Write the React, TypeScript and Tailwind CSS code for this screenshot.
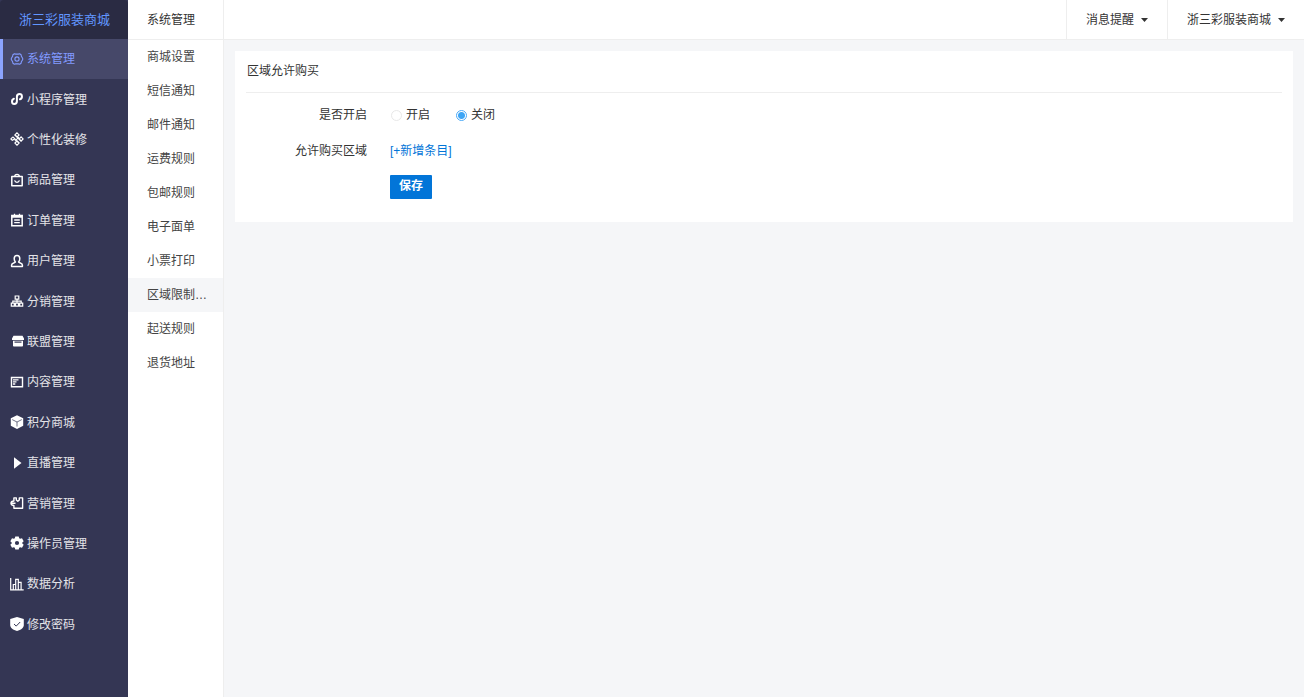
import {ReactNode, useState} from 'react';

function Icon({children, filled = false}: {children: ReactNode; filled?: boolean}) {
  return (
    <svg
      className="mb-px size-3.5 shrink-0"
      viewBox="0 0 14 14"
      fill={filled ? 'currentColor' : 'none'}
      stroke={filled ? 'none' : 'currentColor'}
      strokeWidth={1.3}
      aria-hidden="true"
    >
      {children}
    </svg>
  );
}

const mainMenu: {label: string; icon: ReactNode}[] = [
  {
    label: '系统管理',
    icon: (
      <Icon>
        <path
          strokeWidth="1.1"
          strokeLinejoin="round"
          d="M4.4 1.8l1.3.3h2.6l1.3-.3 1.5 1 .3 1.5 1.3 2.2v1l-1.300 2.200-.3 1.500-1.500 1-1.300-.3H5.700l-1.300.3-1.500-1-.3-1.500L1.300 7.500v-1l1.300-2.200.3-1.500z"
        />
        <circle cx="7" cy="7" r="2.1" strokeWidth="1.1" />
      </Icon>
    ),
  },
  {
    label: '小程序管理',
    icon: (
      <Icon>
        <path
          strokeWidth="2"
          strokeLinecap="round"
          d="M3.900 6.700C1.200 7.700 1.500 12 4.200 12c1.700 0 2.700-1.100 2.700-2.700V4.700C6.900 3.100 7.900 2 9.600 2c2.900 0 3.200 4.300.4 5.300"
        />
      </Icon>
    ),
  },
  {
    label: '个性化装修',
    icon: (
      <Icon>
        <g strokeWidth="1.2">
          <path d="M7 .8l2.100 2.100L7 5 4.900 2.900zM7 9l2.100 2.100L7 13.200l-2.100-2.100z" />
          <path d="M4.900 2.900l6.200 6.200M2.900 4.900l6.200 6.200M9.100 4.900L4.900 9.100" />
          <path d="M2.900 4.900L.9 6.900l1.400 1.400 2.600-1.400M11.100 4.900l2 2-2 2.200L9.100 7z" />
        </g>
      </Icon>
    ),
  },
  {
    label: '商品管理',
    icon: (
      <Icon>
        <path strokeWidth="1.5" strokeLinejoin="round" d="M1.800 3.500h10.400v9.200H1.800z" />
        <path d="M4.700 3.500C4.700.6 9.300.6 9.300 3.500M4.600 7.400c.7 2.500 4.100 2.500 4.800 0" />
      </Icon>
    ),
  },
  {
    label: '订单管理',
    icon: (
      <Icon>
        <path strokeWidth="1.500" d="M1.800 2.500h10.400v10.200H1.800zM1.800 4h10.400" />
        <path d="M4.500.7v3M9.500.7v3M4.200 7h5.600M4.200 9.600h5.600" />
      </Icon>
    ),
  },
  {
    label: '用户管理',
    icon: (
      <Icon>
        <path
          strokeWidth="1.500"
          strokeLinejoin="round"
          d="M5.400 8C4.500 7 4.200 6 4.200 4.700c0-1.900 1-3.100 2.800-3.100s2.800 1.200 2.800 3.100C9.800 6 9.500 7 8.600 8c0 .8 3.800.7 3.800 3v1.500H1.600V11c0-2.300 3.800-2.200 3.800-3z"
        />
      </Icon>
    ),
  },
  {
    label: '分销管理',
    icon: (
      <Icon>
        <path
          strokeWidth="1.200"
          d="M5.200 2h3.600v3.200H5.200zM1.300 9.200h3v2.900h-3zM5.500 9.200h3v2.900h-3zM9.700 9.200h3v2.900h-3zM7 5.200v4M2.800 9.200v-2h8.400v2"
        />
      </Icon>
    ),
  },
  {
    label: '联盟管理',
    icon: (
      <Icon filled>
        <path d="M3.500 1.800h9l1.500 2.700v1.600H2V4.500zM3 6.700h10v5c0 .5-.3.800-.8.800H3.800c-.5 0-.8-.3-.8-.8z" />
        <path className="fill-[#343654]" d="M4.500 7.500h7v1.200h-7z" />
      </Icon>
    ),
  },
  {
    label: '内容管理',
    icon: (
      <Icon>
        <path strokeWidth="1.400" d="M1.500 2.500h11v9.300h-11z" />
        <path strokeWidth="1.300" d="M3 4.800h5.500M3 6.900h3.500M3 9h2.300" />
      </Icon>
    ),
  },
  {
    label: '积分商城',
    icon: (
      <Icon filled>
        <path d="M7 .3l6.200 3v7.400L7 14 .8 10.700V3.300z" />
        <path className="fill-none stroke-[#343654]" strokeWidth=".7" d="M2.200 4.600L7 7l4.800-2.400M7 7v4.500" />
      </Icon>
    ),
  },
  {
    label: '直播管理',
    icon: (
      <Icon filled>
        <path d="M4 1.300L11.500 7 4 12.700z" />
      </Icon>
    ),
  },
  {
    label: '营销管理',
    icon: (
      <Icon>
        <path
          strokeWidth="1.400"
          strokeLinejoin="round"
          d="M3.900 5V1.900h2.400v2l1.500 1.400 1.500-1.400v-2h3.300v10.400H3.900V9.500C2.200 9.500 1 8.600 1 7.300S2.200 5 3.900 5zM1 7.300h4.500"
        />
      </Icon>
    ),
  },
  {
    label: '操作员管理',
    icon: (
      <Icon filled>
        <path
          fillRule="evenodd"
          d="M5.300.4h3.400L9.200 2.300l.9.500 1.900-.5 1.700 2.900L12.300 6.500v1l1.400 1.300-1.700 2.900-1.900-.5-.9.500-.5 1.900H5.300l-.5-1.900-.9-.5-1.900.5L.3 8.800 1.700 7.500v-1L.3 5.200 2 2.300l1.900.5.9-.5zM7 4.900a2.100 2.100 0 100 4.200 2.100 2.100 0 000-4.200z"
        />
      </Icon>
    ),
  },
  {
    label: '数据分析',
    icon: (
      <Icon>
        <path strokeWidth="1.200" d="M.700 1v11.900h13M3.300 12.500V7.500h2.400v5M5.700 12.500V2.400h2.600v10.100M8.300 5.300h2.800v7.200" />
      </Icon>
    ),
  },
  {
    label: '修改密码',
    icon: (
      <Icon filled>
        <path d="M7 0l6.800 2v6c0 3-3 5-6.800 6C3.200 13 .2 11 .2 8V2z" />
        <path className="fill-none stroke-[#343654]" strokeWidth="1" d="M4 7l2.200 2.100L10.200 5" />
      </Icon>
    ),
  },
];

const subMenu = [
  '商城设置',
  '短信通知',
  '邮件通知',
  '运费规则',
  '包邮规则',
  '电子面单',
  '小票打印',
  '区域限制…',
  '起送规则',
  '退货地址',
];

function Sidebar() {
  return (
    <aside className="w-32 shrink-0 bg-[#343654]">
      <a
        href="#home"
        className="flex h-[39px] items-center rounded-t-sm bg-[#2a2b43] pl-[19px] text-[13px] text-[#6196ff]"
      >
        浙三彩服装商城
      </a>
      <nav className="grid min-h-[606px] auto-rows-fr">
        {mainMenu.map(({label, icon}, index) => (
          <a
            key={label}
            href={`#main-${index}`}
            className={
              index === 0
                ? 'flex items-center gap-[3px] border-l-3 border-[#8ca4ff] bg-[#464869] pl-[7px] text-[#829aff]'
                : 'flex items-center gap-[3px] pl-2.5 text-white'
            }
          >
            {icon}
            <span className={index === 0 ? '' : 'text-[#e4e4e8]'}>{label}</span>
          </a>
        ))}
      </nav>
    </aside>
  );
}

function SubSidebar() {
  return (
    <aside className="w-24 shrink-0 border-r border-[#eee] bg-white">
      <h2 className="flex h-10 items-center border-b border-[#eee] pl-[19px]">系统管理</h2>
      <nav>
        {subMenu.map((label) => (
          <a
            key={label}
            href={`#${label}`}
            className={`flex h-[34px] items-center pl-[19px] text-[#444] ${
              label === '区域限制…' ? 'bg-[#f5f6f8]' : ''
            }`}
          >
            {label}
          </a>
        ))}
      </nav>
    </aside>
  );
}

function HeaderDropdown({label}: {label: string}) {
  return (
    <button type="button" className="flex items-center gap-[7px] border-l border-[#eee] px-[19px]">
      {label}
      <svg className="h-1 w-[7px]" viewBox="0 0 7 4" fill="currentColor" aria-hidden="true">
        <path d="M0 0h7L3.500 4z" />
      </svg>
    </button>
  );
}

function RadioOption({
  id,
  label,
  checked,
  onChange,
}: {
  id: string;
  label: string;
  checked: boolean;
  onChange: () => void;
}) {
  return (
    <label htmlFor={id} className="flex items-center gap-1">
      <input
        id={id}
        type="radio"
        name="enabled"
        checked={checked}
        onChange={onChange}
        className="size-[11px] appearance-none rounded-full border border-[#e8e8e8] bg-white checked:border-[#4aa9f7] checked:bg-[radial-gradient(circle,#3da5f5_0_3px,#fff_4px)]"
      />
      {label}
    </label>
  );
}

export default function App() {
  const [enabled, setEnabled] = useState(false);
  return (
    <div className="flex min-h-screen bg-[#f5f6f8] font-['Liberation_Sans','Noto_Sans_CJK_SC',sans-serif] text-xs text-[#333]">
      <Sidebar />
      <SubSidebar />
      <div className="flex-1">
        <header className="flex h-10 justify-end border-b border-[#eee] bg-white">
          <HeaderDropdown label="消息提醒" />
          <HeaderDropdown label="浙三彩服装商城" />
        </header>
        <main className="p-[11px]">
          <section className="bg-white px-[11px] pb-[23px]">
            <h1 className="flex h-[42px] items-center border-b border-[#eee] pb-0.5 pl-px">区域允许购买</h1>
            <form
              className="grid grid-cols-[121px_1fr] items-center gap-x-[23px] gap-y-3 pt-2.5"
              onSubmit={(e) => e.preventDefault()}
            >
              <span id="enabled-label" className="text-right leading-6">
                是否开启
              </span>
              <div role="radiogroup" aria-labelledby="enabled-label" className="flex gap-[26px] pl-px">
                <RadioOption id="enabled-on" label="开启" checked={enabled} onChange={() => setEnabled(true)} />
                <RadioOption id="enabled-off" label="关闭" checked={!enabled} onChange={() => setEnabled(false)} />
              </div>
              <span className="text-right leading-6">允许购买区域</span>
              <a href="#add" className="text-[#0275d8]">
                [+新增条目]
              </a>
              <button
                type="submit"
                className="col-start-2 h-6 justify-self-start rounded-[1px] bg-[#0275d8] px-[9px] pb-0.5 font-bold text-white"
              >
                保存
              </button>
            </form>
          </section>
        </main>
      </div>
    </div>
  );
}
